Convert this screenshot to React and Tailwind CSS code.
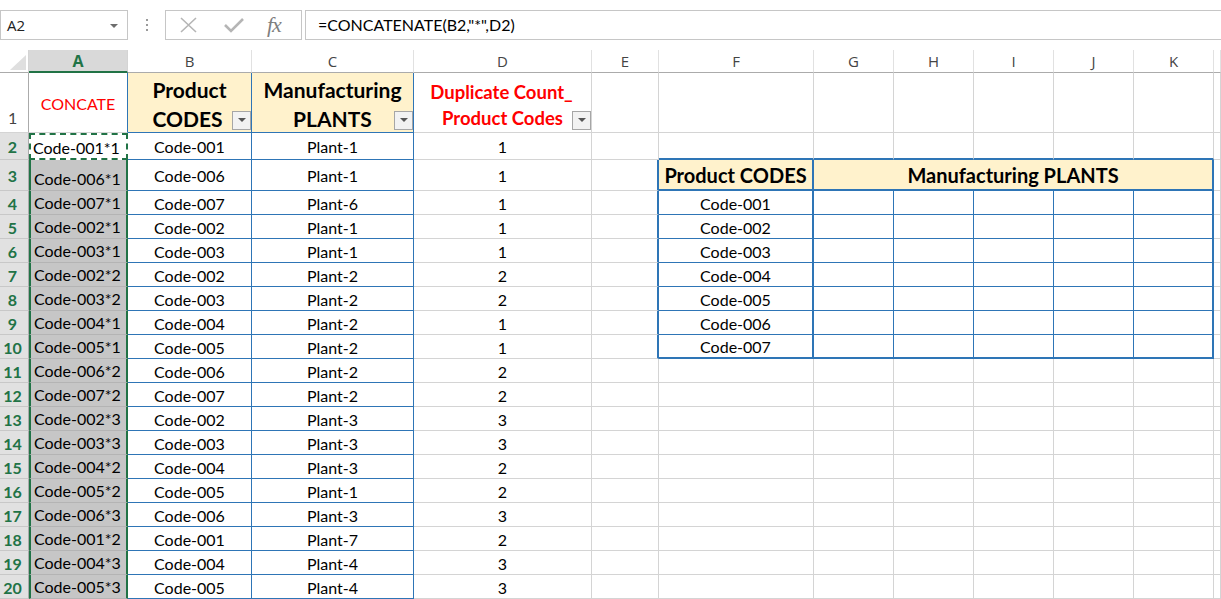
import React from "react";

const rows = [
  ["Code-001*1", "Code-001", "Plant-1", 1],
  ["Code-006*1", "Code-006", "Plant-1", 1],
  ["Code-007*1", "Code-007", "Plant-6", 1],
  ["Code-002*1", "Code-002", "Plant-1", 1],
  ["Code-003*1", "Code-003", "Plant-1", 1],
  ["Code-002*2", "Code-002", "Plant-2", 2],
  ["Code-003*2", "Code-003", "Plant-2", 2],
  ["Code-004*1", "Code-004", "Plant-2", 1],
  ["Code-005*1", "Code-005", "Plant-2", 1],
  ["Code-006*2", "Code-006", "Plant-2", 2],
  ["Code-007*2", "Code-007", "Plant-2", 2],
  ["Code-002*3", "Code-002", "Plant-3", 3],
  ["Code-003*3", "Code-003", "Plant-3", 3],
  ["Code-004*2", "Code-004", "Plant-3", 2],
  ["Code-005*2", "Code-005", "Plant-1", 2],
  ["Code-006*3", "Code-006", "Plant-3", 3],
  ["Code-001*2", "Code-001", "Plant-7", 2],
  ["Code-004*3", "Code-004", "Plant-4", 3],
  ["Code-005*3", "Code-005", "Plant-4", 3],
];

const letters = ["A", "B", "C", "D", "E", "F", "G", "H", "I", "J", "K", ""];

// border presets
const rg = "border-r border-r-[#d4d4d4]";
const rb = "border-r border-r-[#2e75b6]";
const rB = "border-r-2 border-r-[#2e75b6]";
const bg = "border-b border-b-[#d4d4d4]";
const bb = "border-b border-b-[#2e75b6]";
const bB = "border-b-2 border-b-[#2e75b6]";

function FilterBtn() {
  return (
    <div className="absolute right-0 bottom-[2px] w-[19px] h-[19px] border border-[#a6a6a6] bg-[#f2f2f2] flex items-center justify-center">
      <svg width="8" height="5" viewBox="0 0 8 5">
        <polygon points="0,0 8,0 4,4" fill="#555" />
      </svg>
    </div>
  );
}

function Blank({ cls }) {
  return <div className={cls} />;
}

export default function App() {
  const cells = [];

  // header row
  cells.push(
    <div key="corner" className="relative bg-white border-r border-r-[#d4d4d4] border-b border-b-[#ababab]">
      <svg className="absolute left-0 top-0" width="29" height="23" viewBox="0 0 29 23">
        <polygon points="26,5 26,20 10,20" fill="#dfdfdf" />
      </svg>
    </div>
  );
  letters.forEach((l, i) => {
    if (l === "A") {
      cells.push(
        <div key="hA" className="flex items-center justify-center bg-[#d9d9d9] border-r border-r-[#d4d4d4] border-b-2 border-b-[#217346] text-[#217346] font-bold text-[16px] font-['Open_Sans',sans-serif]">
          A
        </div>
      );
    } else {
      cells.push(
        <div key={"h" + i} className="flex items-center justify-center bg-white border-r border-r-[#e1e1e1] border-b border-b-[#ababab] text-[#444] text-[15px] font-['Open_Sans',sans-serif]">
          {l}
        </div>
      );
    }
  });

  // row 1
  cells.push(
    <div key="r1" className="flex items-end pl-[8px] pb-[2px] bg-white border-r border-r-[#ababab] border-b border-b-[#d4d4d4] text-[#444] text-[16px]">
      1
    </div>
  );
  cells.push(
    <div key="a1" className={`flex items-center justify-center pt-[2px] text-[#ff0000] text-[16px] ${rb} ${bg}`}>
      CONCATE
    </div>
  );
  cells.push(
    <div key="b1" className={`relative flex flex-col items-center justify-center pt-[3px] bg-[#fff2cc] font-bold text-[21px] leading-[29px] text-black ${rb} ${bb}`}>
      <span>Product</span>
      <span className="pr-[4px]">CODES</span>
      <FilterBtn />
    </div>
  );
  cells.push(
    <div key="c1" className={`relative flex flex-col items-center justify-center pt-[3px] bg-[#fff2cc] font-bold text-[21px] leading-[29px] text-black ${rb} ${bb}`}>
      <span>Manufacturing</span>
      <span>PLANTS</span>
      <FilterBtn />
    </div>
  );
  cells.push(
    <div key="d1" className={`relative flex flex-col items-center justify-center pt-[4px] pr-[8px] font-bold text-[18.5px] leading-[26px] text-[#ff0000] ${rg} ${bg}`}>
      <span className="pl-[6px]">Duplicate Count_</span>
      <span className="pl-[8px]">Product Codes</span>
      <FilterBtn />
    </div>
  );
  for (let c = 0; c < 8; c++) cells.push(<Blank key={"r1e" + c} cls={`${rg} ${bg}`} />);

  // rows 2..20
  rows.forEach((r, idx) => {
    const n = idx + 2;
    cells.push(
      <div key={"rn" + n} className="flex items-center justify-center pt-[2px] pr-[3px] bg-[#e1e1e1] border-r border-r-[#ababab] border-b border-b-[#c8c8c8] text-[#217346] font-bold text-[16px]">
        {n}
      </div>
    );
    if (n === 2) {
      cells.push(
        <div key={"a" + n} className="flex items-center pt-[2px] pl-[2px] bg-white border-2 border-dashed border-[#217346] text-[16px] text-black">
          {r[0]}
        </div>
      );
    } else {
      cells.push(
        <div key={"a" + n} className="flex items-end pl-[3px] bg-[#c6c6c6] border-l-2 border-l-[#217346] border-r-2 border-r-[#217346] border-b border-b-[#b4b4b4] text-[16px] leading-[22px] text-black">
          {r[0]}
        </div>
      );
    }
    cells.push(
      <div key={"b" + n} className={`flex items-center justify-center pt-[2px] text-[16px] text-black ${rb} ${bb}`}>
        {r[1]}
      </div>
    );
    cells.push(
      <div key={"c" + n} className={`flex items-center justify-center pt-[2px] text-[16px] text-black ${rb} ${bb}`}>
        {r[2]}
      </div>
    );
    cells.push(
      <div key={"d" + n} className={`flex items-center justify-center pt-[2px] text-[16px] text-black ${rg} ${bg}`}>
        {r[3]}
      </div>
    );

    // E..K + extra
    if (n === 2) {
      cells.push(<Blank key="e2" cls={`${rg} ${bg}`} />);
      for (let c = 0; c < 6; c++) cells.push(<Blank key={"t2" + c} cls={`${rg} ${bB}`} />);
      cells.push(<Blank key="x2" cls={`${rg} ${bg}`} />);
    } else if (n === 3) {
      cells.push(<Blank key="e3" cls={`${rB} ${bg}`} />);
      cells.push(
        <div key="f3" className={`flex items-center justify-center pt-[1px] bg-[#fff2cc] font-bold text-[20px] text-black ${rB} ${bB}`}>
          Product CODES
        </div>
      );
      cells.push(
        <div key="g3" className={`col-span-5 flex items-center justify-center pt-[1px] bg-[#fff2cc] font-bold text-[20px] text-black ${rB} ${bB}`}>
          Manufacturing PLANTS
        </div>
      );
      cells.push(<Blank key="x3" cls={`${rg} ${bg}`} />);
    } else if (n <= 10) {
      const bot = n === 10 ? bB : bb;
      cells.push(<Blank key={"e" + n} cls={`${rB} ${bg}`} />);
      cells.push(
        <div key={"f" + n} className={`flex items-center justify-center pt-[2px] text-[16px] text-black ${rB} ${bot}`}>
          {"Code-00" + (n - 3)}
        </div>
      );
      for (let c = 0; c < 4; c++) cells.push(<Blank key={"t" + n + c} cls={`${rb} ${bot}`} />);
      cells.push(<Blank key={"k" + n} cls={`${rB} ${bot}`} />);
      cells.push(<Blank key={"x" + n} cls={`${rg} ${bg}`} />);
    } else {
      for (let c = 0; c < 8; c++) cells.push(<Blank key={"g" + n + c} cls={`${rg} ${bg}`} />);
    }
  });

  return (
    <div className="w-[1221px] h-[599px] overflow-hidden bg-white font-['Lato',sans-serif]">
      {/* formula bar */}
      <div className="flex items-start h-[50px] pt-[10px]">
        <div className="relative flex items-center w-[128px] h-[30px] border border-[#c6c6c6] pl-[6px] text-[15px] text-[#222] font-['Open_Sans',sans-serif]">
          A2
          <svg className="absolute right-[9px] top-[13px]" width="8" height="4" viewBox="0 0 8 4">
            <polygon points="0,0 8,0 4,4" fill="#6d6d6d" />
          </svg>
        </div>
        <div className="flex flex-col items-center gap-[3px] w-[37px] pt-[9px]">
          <span className="w-[2px] h-[2px] bg-[#9a9a9a]" />
          <span className="w-[2px] h-[2px] bg-[#9a9a9a]" />
          <span className="w-[2px] h-[2px] bg-[#9a9a9a]" />
        </div>
        <div className="flex items-center w-[137px] h-[30px] border border-[#c6c6c6]">
          <svg className="ml-[14px]" width="17" height="16" viewBox="0 0 17 16">
            <path d="M1 1 L16 15 M16 1 L1 15" stroke="#b5b5b5" strokeWidth="1.6" fill="none" />
          </svg>
          <svg className="ml-[27px]" width="20" height="16" viewBox="0 0 20 16">
            <path d="M1 8 L7 14 L19 2" stroke="#b5b5b5" strokeWidth="2.6" fill="none" />
          </svg>
          <span className="ml-[23px] font-['Liberation_Serif',serif] italic text-[22px] leading-none text-[#7f7f7f] tracking-[-1px]">
            fx
          </span>
        </div>
        <div className="flex items-center flex-1 h-[30px] ml-[3px] border border-[#c6c6c6] border-r-0 pl-[12px] text-[16px] text-black">
          =CONCATENATE(B2,"*",D2)
        </div>
      </div>

      {/* sheet grid */}
      <div className="grid grid-cols-[29px_99px_124px_162px_178px_67px_155px_80px_80px_80px_80px_80px_1fr] grid-rows-[23px_60px_27px_31px_repeat(17,24px)]">
        {cells}
      </div>
    </div>
  );
}
